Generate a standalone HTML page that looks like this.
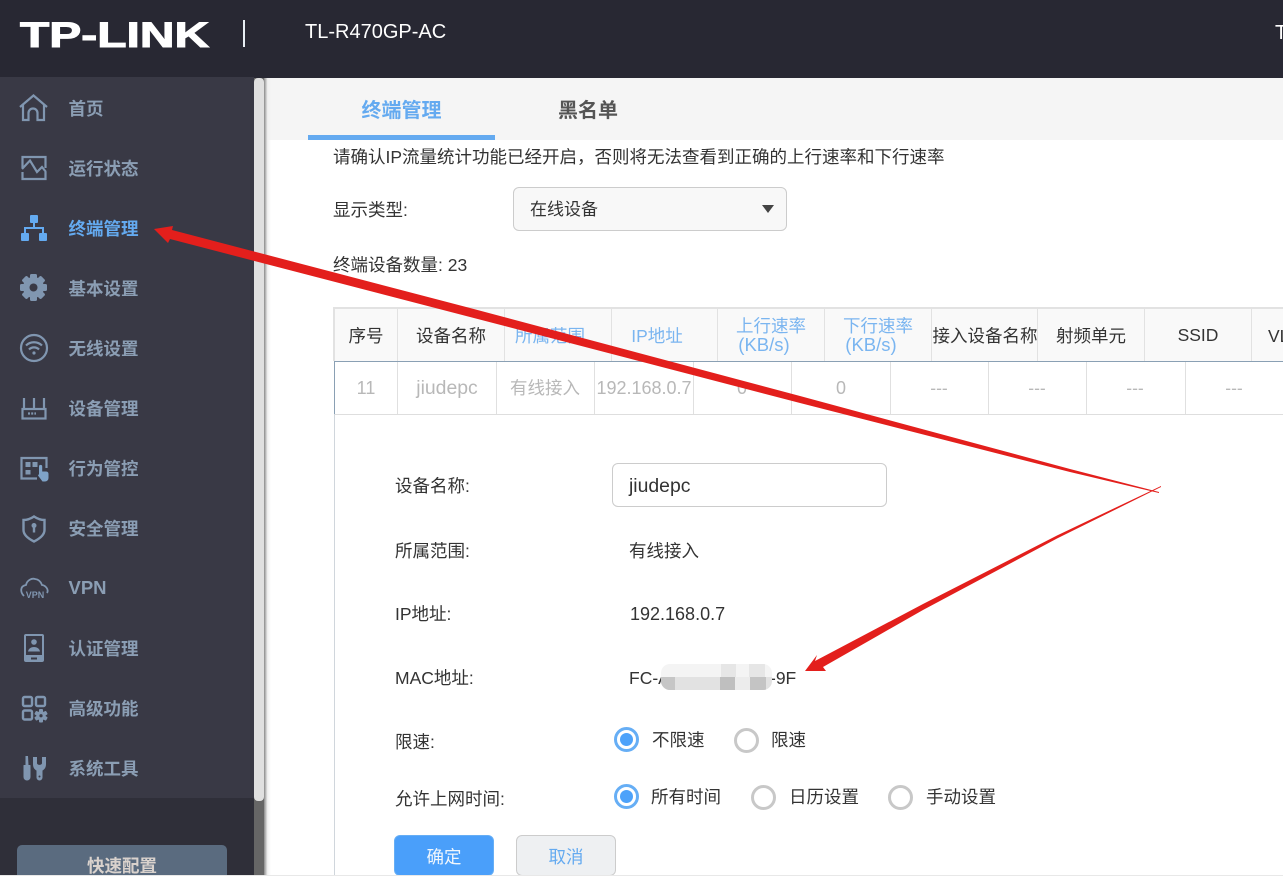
<!DOCTYPE html>
<html lang="zh">
<head>
<meta charset="utf-8">
<title>TP-LINK TL-R470GP-AC</title>
<style>
html,body{margin:0;padding:0;background:#fff}
body{position:relative;width:1283px;height:876px;overflow:hidden;font-family:"Liberation Sans","Noto Sans CJK SC",sans-serif;color:#333}
.a{position:absolute}
.t{position:absolute;white-space:nowrap;line-height:24px;font-size:17.5px;font-family:"Liberation Sans","Noto Sans CJK SC",sans-serif;color:#333}
.c{transform:translateX(-50%)}
.m{font-weight:700;color:#8b9eb4;left:68.5px}
.b{color:#7ab5f0}
.g{color:#b8b8b8}
.r{position:absolute;width:25px;height:25px;border-radius:50%;box-sizing:border-box;border:3px solid #c8c8c8;background:#fff}
.r.on{border-color:#66aef5}
.r.on::after{content:"";position:absolute;left:3px;top:3px;width:13px;height:13px;border-radius:50%;background:#4da2fa}
.v{position:absolute;top:308px;width:1px;height:53px;background:#e2e2e2}
.w{position:absolute;top:362px;width:1px;height:52px;background:#e0e0e0}
.p{position:absolute}
</style>
</head>
<body>
<div class="a" style="left:0;top:0;width:1283px;height:78px;background:#282833"></div>
<div class="t" style="left:20px;top:15px;font-size:35px;line-height:42px;font-weight:700;color:#fff;-webkit-text-stroke:1px #fff;transform:scaleX(1.37);transform-origin:0 0">TP-LINK</div>
<div class="a" style="left:243px;top:20px;width:2px;height:27px;background:#e8eef4"></div>
<div class="t" style="left:305px;top:20px;font-size:20px;color:#fff">TL-R470GP-AC</div>
<div class="t" style="left:1275px;top:21px;font-size:20px;color:#fff">T</div>

<div class="a" style="left:0;top:77px;width:254px;height:721px;background:#393945"></div>
<div class="a" style="left:0;top:798px;width:254px;height:78px;background:#2f2f39"></div>
<div class="a" style="left:254px;top:78px;width:10px;height:798px;background:#666"></div>
<div class="a" style="left:254px;top:78px;width:10px;height:723px;background:#e0e0e0;border-radius:4px"></div>

<div class="a" style="left:264px;top:78px;width:1019px;height:62px;background:#f5f5f5"></div>
<div class="a" style="left:264px;top:78px;width:7px;height:798px;background:linear-gradient(90deg,#8a8a8a,rgba(238,238,238,.8) 50%,rgba(255,255,255,0))"></div>
<div class="a" style="left:308px;top:135px;width:187px;height:5px;background:#64aaf0"></div>
<div class="t" style="left:361.5px;top:98px;font-size:20px;line-height:26px;font-weight:700;color:#64aaf0">终端管理</div>
<div class="t" style="left:558px;top:98px;font-size:20px;line-height:26px;font-weight:700;color:#555">黑名单</div>

<div class="t m" style="top:97px">首页</div>
<div class="t m" style="top:157px">运行状态</div>
<div class="t m" style="top:217px;color:#64aaf0">终端管理</div>
<div class="t m" style="top:277px">基本设置</div>
<div class="t m" style="top:337px">无线设置</div>
<div class="t m" style="top:397px">设备管理</div>
<div class="t m" style="top:457px">行为管控</div>
<div class="t m" style="top:517px">安全管理</div>
<div class="t m" style="top:576px;font-size:18.5px">VPN</div>
<div class="t m" style="top:637px">认证管理</div>
<div class="t m" style="top:697px">高级功能</div>
<div class="t m" style="top:757px">系统工具</div>

<svg class="a" style="left:0;top:0" width="60" height="800" viewBox="0 0 60 800" fill="none" stroke="#8096b0" stroke-width="2.2">
  <path d="M20 107L33.500 95.500L47 107"/>
  <path d="M23 105V120H28.500V113a4.500 4.500 0 0 1 9 0V120H44V105"/>
  <path d="M22.500 168V157H45.500V168M45.500 172V179H22.500V172"/>
  <path d="M22 169L30 160.500L37 172L42 167L46 172"/>
  <g fill="#64aaf0" stroke="none">
    <rect x="30" y="215" width="8" height="8" rx="1"/>
    <rect x="21" y="233" width="8" height="8" rx="1"/>
    <rect x="39" y="233" width="8" height="8" rx="1"/>
    <path d="M33 223h2v4h9v6h-2v-4H26v4h-2v-6h9z"/>
  </g>
  <g fill="#8096b0" stroke="none">
    <rect x="30" y="274" width="7" height="27" rx="1.500"/>
    <rect x="30" y="274" width="7" height="27" rx="1.500" transform="rotate(45 33.500 287.500)"/>
    <rect x="30" y="274" width="7" height="27" rx="1.500" transform="rotate(90 33.500 287.500)"/>
    <rect x="30" y="274" width="7" height="27" rx="1.500" transform="rotate(135 33.500 287.500)"/>
  </g>
  <circle cx="33.500" cy="287.500" r="7.500" stroke-width="6"/>
  <circle cx="33.500" cy="287.500" r="4" fill="#393945" stroke="none"/>
  <circle cx="34" cy="348" r="13"/>
  <path d="M26 345.500a11.500 11.500 0 0 1 16 0M29 349.500a7 7 0 0 1 10 0"/>
  <circle cx="34" cy="353" r="1.600" fill="#8096b0" stroke="none"/>
  <rect x="22.500" y="409" width="23" height="9.500"/>
  <path d="M24 398V409M34 398V409M44 398V409"/>
  <path d="M28 413.500h8" stroke-dasharray="2 1.200"/>
  <path d="M37 478.500H21.500V458H46.500V468"/>
  <g fill="#8096b0" stroke="none">
    <rect x="25.500" y="462" width="5" height="5"/><rect x="32.500" y="462" width="5" height="5"/><rect x="25.500" y="470" width="5" height="4.500"/>
  </g>
  <path fill="#7fa3c8" stroke="none" d="M39 466.500a1.600 1.600 0 0 1 3.200 0V471.500h4a2.500 2.500 0 0 1 2.300 2.500V478a3.500 3.500 0 0 1-3.500 3.500H42.500L38 475.500L39 474z"/>
  <path d="M23.500 520C28 520 31 518.500 34 516.500C37 518.500 40 520 44.500 520V530C44.500 535 39 539 34 541.500C29 539 23.500 535 23.500 530Z" stroke-width="2.400"/>
  <circle cx="34" cy="525.500" r="2.500" fill="#8096b0" stroke="none"/>
  <path d="M34 526V532.500" stroke-width="2.400"/>
  <path d="M24 596C20 592 20 586 26 585C27 580 32 578 35 579C39 579.500 41 582 42 585C46 585.500 49 590 47 593" stroke-width="1.800"/>
  <text x="35" y="598" text-anchor="middle" font-family="Liberation Sans" font-size="9" font-weight="700" fill="#8096b0" stroke="none">VPN</text>
  <path fill="#8096b0" stroke="none" fill-rule="evenodd" d="M26 634h16a2 2 0 0 1 2 2v24a2 2 0 0 1-2 2H26a2 2 0 0 1-2-2V636a2 2 0 0 1 2-2zM26 636v19h16v-19zM31 657.500v2h6v-2z"/>
  <circle cx="34" cy="642" r="2.800" fill="#8096b0" stroke="none"/>
  <path d="M28 651.500c1-6 11-6 12 0z" fill="#8096b0" stroke="none"/>
  <rect x="23" y="697" width="9" height="9" rx="1.500" stroke-width="2.400"/>
  <rect x="36" y="697" width="9" height="9" rx="1.500" stroke-width="2.400"/>
  <rect x="23" y="710.500" width="9" height="9" rx="1.500" stroke-width="2.400"/>
  <g fill="#8096b0" stroke="none">
    <rect x="39" y="709" width="4" height="13.500" rx="1"/>
    <rect x="39" y="709" width="4" height="13.500" rx="1" transform="rotate(60 41 715.750)"/>
    <rect x="39" y="709" width="4" height="13.500" rx="1" transform="rotate(120 41 715.750)"/>
  </g>
  <circle cx="41" cy="715.750" r="3.500" stroke-width="2.400"/>
  <circle cx="41" cy="715.750" r="1.600" fill="#393945" stroke="none"/>
  <g fill="#8096b0" stroke="none">
    <path d="M25.500 756h2.500l.5 9h1.500a.5.5 0 0 1 .5.5V777a3.500 3.500 0 0 1-7 0V765.500a.5.5 0 0 1 .5-.5h1.500z"/>
    <path fill-rule="evenodd" d="M33 757h4v6c0 2.500 5 2.500 5 0v-6h4v7c0 3.500-1.500 5.500-3.500 6.500V777.500a3 3 0 0 1-6 0V770.500C34.500 769.500 33 767.500 33 764zM38.500 776.500a1 1 0 1 0 2 0a1 1 0 1 0-2 0z"/>
  </g>
</svg>

<div class="a" style="left:17px;top:845px;width:210px;height:31px;background:#5a6b7f;border-radius:5px 5px 0 0"></div>
<div class="t c" style="left:122px;top:854px;font-weight:700;color:#d9d2cd">快速配置</div>

<div class="t" style="left:333px;top:145px">请确认IP流量统计功能已经开启，否则将无法查看到正确的上行速率和下行速率</div>
<div class="t" style="left:333px;top:198px">显示类型:</div>
<div class="a" style="left:513px;top:187px;width:274px;height:44px;box-sizing:border-box;border:1px solid #ccc;border-radius:6px;background:#f8f8f8"></div>
<div class="t" style="left:530px;top:198px;font-size:17px">在线设备</div>
<div class="a" style="left:762px;top:205px;width:0;height:0;border-left:6.500px solid transparent;border-right:6.500px solid transparent;border-top:8px solid #444"></div>
<div class="t" style="left:333px;top:253px">终端设备数量: 23</div>

<div class="a" style="left:334px;top:307px;width:949px;height:2px;background:#e2e2e2"></div>
<div class="a" style="left:334px;top:309px;width:949px;height:52px;background:#f9f9f9"></div>
<div class="a" style="left:334px;top:361px;width:949px;height:1px;background:#8aa0b4"></div>
<div class="a" style="left:334px;top:414px;width:949px;height:1px;background:#dedede"></div>
<div class="a" style="left:333px;top:307px;width:2px;height:54px;background:#e2e2e2"></div>
<div class="a" style="left:334px;top:361px;width:1px;height:53px;background:#8aa0b4"></div>
<div class="a" style="left:334px;top:414px;width:1px;height:462px;background:#d0d6dc"></div>

<div class="v" style="left:397px"></div><div class="v" style="left:504px"></div><div class="v" style="left:611px"></div><div class="v" style="left:717px"></div><div class="v" style="left:824px"></div><div class="v" style="left:931px"></div><div class="v" style="left:1037px"></div><div class="v" style="left:1144px"></div><div class="v" style="left:1251px"></div>
<div class="w" style="left:397px"></div><div class="w" style="left:496px"></div><div class="w" style="left:594px"></div><div class="w" style="left:693px"></div><div class="w" style="left:791px"></div><div class="w" style="left:890px"></div><div class="w" style="left:988px"></div><div class="w" style="left:1086px"></div><div class="w" style="left:1185px"></div>

<div class="t c" style="left:366px;top:324px">序号</div>
<div class="t c" style="left:451px;top:324px">设备名称</div>
<div class="t c b" style="left:550px;top:324px">所属范围</div>
<div class="t c b" style="left:657px;top:324px">IP地址</div>
<div class="t c b" style="left:771px;top:314px">上行速率</div>
<div class="t c b" style="left:764px;top:333px;font-size:18.500px">(KB/s)</div>
<div class="t c b" style="left:878px;top:314px">下行速率</div>
<div class="t c b" style="left:871px;top:333px;font-size:18.500px">(KB/s)</div>
<div class="t c" style="left:985px;top:324px">接入设备名称</div>
<div class="t c" style="left:1091px;top:324px">射频单元</div>
<div class="t c" style="left:1198px;top:323px">SSID</div>
<div class="t" style="left:1268px;top:324px">VLAN</div>

<div class="t c g" style="left:366px;top:376px;font-size:18px">11</div>
<div class="t c g" style="left:447px;top:376px;font-size:19.400px">jiudepc</div>
<div class="t c g" style="left:545px;top:376px">有线接入</div>
<div class="t c g" style="left:644px;top:376px;font-size:18px">192.168.0.7</div>
<div class="t c g" style="left:742px;top:376px;font-size:18px">0</div>
<div class="t c g" style="left:841px;top:376px;font-size:18px">0</div>
<div class="t c g" style="left:939px;top:376px">---</div>
<div class="t c g" style="left:1037px;top:376px">---</div>
<div class="t c g" style="left:1135px;top:376px">---</div>
<div class="t c g" style="left:1234px;top:376px">---</div>

<div class="t" style="left:395px;top:474px">设备名称:</div>
<div class="a" style="left:612px;top:463px;width:275px;height:44px;box-sizing:border-box;border:1px solid #ccc;border-radius:6px;background:#fff"></div>
<div class="t" style="left:629px;top:474px;font-size:19.400px">jiudepc</div>
<div class="t" style="left:395px;top:539px">所属范围:</div>
<div class="t" style="left:629px;top:539px">有线接入</div>
<div class="t" style="left:395px;top:602px">IP地址:</div>
<div class="t" style="left:630px;top:602px;font-size:18px">192.168.0.7</div>
<div class="t" style="left:395px;top:666px">MAC地址:</div>
<div class="t" style="left:629px;top:666px">FC-A</div>
<div class="t" style="left:770px;top:666px">-9F</div>
<div class="a" style="left:661px;top:664px;width:111px;height:26px;border-radius:9px;overflow:hidden;background:#f4f4f4">
  <div class="p" style="left:60px;top:0;width:15px;height:13px;background:#e6e6e6"></div>
  <div class="p" style="left:88px;top:0;width:16px;height:13px;background:#e6e6e6"></div>
  <div class="p" style="left:0;top:13px;width:111px;height:13px;background:#e2e2e2"></div>
  <div class="p" style="left:0;top:13px;width:14px;height:13px;background:#c6c6c6"></div>
  <div class="p" style="left:59px;top:13px;width:15px;height:13px;background:#bfbfbf"></div>
  <div class="p" style="left:74px;top:13px;width:15px;height:13px;background:#ececec"></div>
  <div class="p" style="left:89px;top:13px;width:16px;height:13px;background:#c4c4c4"></div>
</div>
<div class="t" style="left:395px;top:730px">限速:</div>
<div class="r on" style="left:614px;top:727px"></div>
<div class="t" style="left:652px;top:728px">不限速</div>
<div class="r" style="left:734px;top:728px"></div>
<div class="t" style="left:771px;top:728px">限速</div>
<div class="t" style="left:395px;top:787px">允许上网时间:</div>
<div class="r on" style="left:614px;top:784px"></div>
<div class="t" style="left:651px;top:785px">所有时间</div>
<div class="r" style="left:751px;top:785px"></div>
<div class="t" style="left:789px;top:785px">日历设置</div>
<div class="r" style="left:888px;top:785px"></div>
<div class="t" style="left:926px;top:785px">手动设置</div>

<div class="a" style="left:394px;top:835px;width:100px;height:41px;box-sizing:border-box;border:1px solid #66aef5;border-radius:6px;background:#4a9ffa"></div>
<div class="t c" style="left:444px;top:845px;color:#f0f6fc">确定</div>
<div class="a" style="left:516px;top:835px;width:100px;height:41px;box-sizing:border-box;border:1px solid #ccc;border-radius:6px;background:#eef0f2"></div>
<div class="t c" style="left:566px;top:845px;color:#64aaf0">取消</div>

<div class="a" style="left:0;top:875px;width:1283px;height:1px;background:#e8e8e8"></div>

<svg class="a" style="left:0;top:0" width="1283" height="876" viewBox="0 0 1283 876">
  <path fill="#e31f1c" d="M154 229L173 226L172 230L470 308L800 396L1070 469L1159 492L1159 493L1070 472L800 403L470 317L170 239L168 243Z"/>
  <path fill="#e31f1c" d="M805 671L817 655L815 661L923 604L1057 535.500L1161 486L1161 487L1057 538.500L923 610L823 667L826 671Z"/>
</svg>
</body>
</html>
